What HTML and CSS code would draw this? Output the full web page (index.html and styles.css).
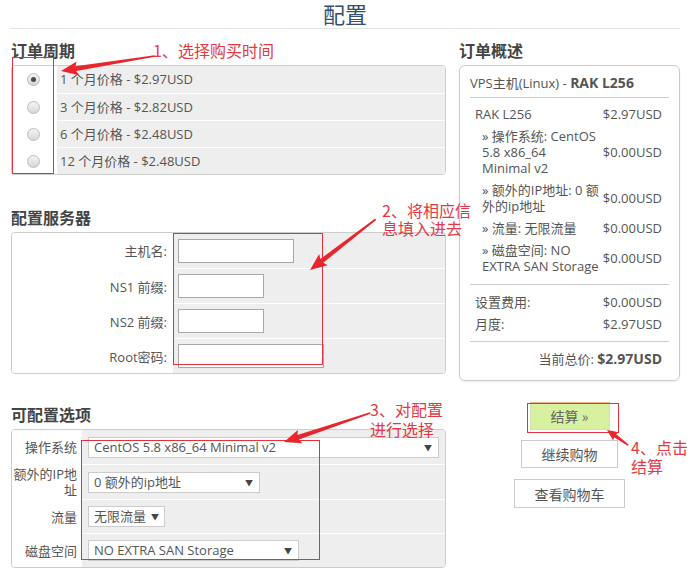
FILE: index.html
```html
<!DOCTYPE html>
<html>

<head>
    <title>配置</title>
    <meta charset="utf-8">
    <link rel="stylesheet" href="styles.css">
</head>

<body>
    <div class="page">
        <h1 class="page-title">配置</h1>

        <div class="layout">
            <div class="main">
                <h2>订单周期</h2>
                <div class="box cycle">
                    <label class="row">
                        <span class="cell-radio"><input type="radio" name="cycle" checked></span>
                        <span class="cell-text">1 个月价格 - $2.97USD</span>
                    </label>
                    <label class="row">
                        <span class="cell-radio"><input type="radio" name="cycle"></span>
                        <span class="cell-text">3 个月价格 - $2.82USD</span>
                    </label>
                    <label class="row">
                        <span class="cell-radio"><input type="radio" name="cycle"></span>
                        <span class="cell-text">6 个月价格 - $2.48USD</span>
                    </label>
                    <label class="row">
                        <span class="cell-radio"><input type="radio" name="cycle"></span>
                        <span class="cell-text">12 个月价格 - $2.48USD</span>
                    </label>
                </div>

                <h2 class="section-server">配置服务器</h2>
                <div class="box server">
                    <div class="row">
                        <span class="cell-label">主机名:</span>
                        <span class="cell-field"><input type="text" class="input-long"></span>
                    </div>
                    <div class="row">
                        <span class="cell-label">NS1 前缀:</span>
                        <span class="cell-field"><input type="text" class="input-short"></span>
                    </div>
                    <div class="row">
                        <span class="cell-label">NS2 前缀:</span>
                        <span class="cell-field"><input type="text" class="input-short"></span>
                    </div>
                    <div class="row">
                        <span class="cell-label">Root密码:</span>
                        <span class="cell-field"><input type="password" class="input-pass"></span>
                    </div>
                </div>

                <h2 class="section-options">可配置选项</h2>
                <div class="box options">
                    <div class="row">
                        <span class="cell-label">操作系统</span>
                        <span class="cell-field">
                            <span class="select select-os">CentOS 5.8 x86_64 Minimal v2<i>▼</i></span>
                        </span>
                    </div>
                    <div class="row row-tall">
                        <span class="cell-label">额外的IP地址</span>
                        <span class="cell-field">
                            <span class="select select-ip">0 额外的ip地址<i>▼</i></span>
                        </span>
                    </div>
                    <div class="row">
                        <span class="cell-label">流量</span>
                        <span class="cell-field">
                            <span class="select select-traffic">无限流量<i>▼</i></span>
                        </span>
                    </div>
                    <div class="row">
                        <span class="cell-label">磁盘空间</span>
                        <span class="cell-field">
                            <span class="select select-disk">NO EXTRA SAN Storage<i>▼</i></span>
                        </span>
                    </div>
                </div>
            </div>

            <div class="side">
                <h2>订单概述</h2>
                <div class="summary">
                    <div class="summary-head">VPS主机(Linux) - <b>RAK L256</b></div>
                    <div class="summary-items">
                        <div class="item">
                            <span class="desc">RAK L256</span>
                            <span class="price">$2.97USD</span>
                        </div>
                        <div class="item sub">
                            <span class="desc">» 操作系统: CentOS<br>5.8 x86_64<br>Minimal v2</span>
                            <span class="price">$0.00USD</span>
                        </div>
                        <div class="item sub">
                            <span class="desc">» 额外的IP地址: 0 额<br>外的ip地址</span>
                            <span class="price">$0.00USD</span>
                        </div>
                        <div class="item sub">
                            <span class="desc">» 流量: 无限流量</span>
                            <span class="price">$0.00USD</span>
                        </div>
                        <div class="item sub">
                            <span class="desc">» 磁盘空间: NO<br>EXTRA SAN Storage</span>
                            <span class="price">$0.00USD</span>
                        </div>
                    </div>
                    <div class="summary-fees">
                        <div class="item">
                            <span class="desc">设置费用:</span>
                            <span class="price">$0.00USD</span>
                        </div>
                        <div class="item">
                            <span class="desc">月度:</span>
                            <span class="price">$2.97USD</span>
                        </div>
                    </div>
                    <div class="summary-total">当前总价: <b>$2.97USD</b></div>
                </div>

                <div class="actions">
                    <button class="btn btn-checkout">结算 »</button>
                    <button class="btn btn-continue">继续购物</button>
                    <button class="btn btn-cart">查看购物车</button>
                </div>
            </div>
        </div>

        <!-- annotations drawn over the screenshot -->
        <div class="mark mark1"></div>
        <div class="mark mark2"></div>
        <div class="mark mark3"></div>
        <div class="mark mark4"></div>

        <div class="note note1">1、选择购买时间</div>
        <div class="note note2">2、将相应信<br>息填入进去</div>
        <div class="note note3">3、对配置<br>进行选择</div>
        <div class="note note4">4、点击<br>结算</div>

        <svg class="arrows" width="689" height="582" viewBox="0 0 689 582">
            <polygon transform="translate(61 71) rotate(-9.1)" points="0,0 17,-7 15,-2.4 95,-0.8 95,0.8 15,2.4 17,7" />
            <polygon transform="translate(310 270) rotate(-37.7)" points="0,0 17,-7 15,-2.4 83,-0.8 83,0.8 15,2.4 17,7" />
            <polygon transform="translate(284 442) rotate(-18.6)" points="0,0 17,-7 15,-2.4 91,-0.8 91,0.8 15,2.4 17,7" />
            <polygon transform="translate(607 430) rotate(35.5)" points="0,0 11,-5 10,-1.8 26,-0.8 26,0.8 10,1.8 11,5" />
        </svg>
    </div>
</body>

</html>
```

FILE: styles.css
```css
body {
    margin: 0;
    font-family: "Open Sans", "Noto Sans CJK SC", sans-serif;
    font-size: 13px;
    color: #555;
    background: #fff;
}

.page {
    position: relative;
    width: 689px;
    height: 582px;
    overflow: hidden;
}

.page-title {
    margin: 0 9px 0 10px;
    padding: 0 0 1px;
    line-height: 27px;
    border-bottom: 1px solid #e5e5e5;
    text-align: center;
    font-family: "Noto Sans CJK SC", sans-serif;
    font-size: 22px;
    font-weight: normal;
    color: #34506e;
}

.layout {
    display: flex;
    padding-left: 11px;
}

.main {
    width: 435px;
}

.side {
    width: 221px;
    margin-left: 13px;
}

h2 {
    margin: 11px 0 5px;
    height: 20px;
    line-height: 20px;
    font-family: "Noto Sans CJK SC", sans-serif;
    font-size: 16px;
    font-weight: bold;
    color: #444;
}

h2.section-server {
    margin-top: 32px;
}

h2.section-options {
    margin-top: 30px;
}

.box {
    border: 1px solid #ccc;
    border-radius: 4px;
    overflow: hidden;
}

.row {
    display: flex;
    box-sizing: border-box;
    border-top: 1px solid #fff;
}

.row:first-child {
    border-top: none;
}

/* order cycle */

.cycle .row {
    height: 27px;
}

.cell-radio {
    width: 43px;
    background: #fff;
    display: flex;
    align-items: center;
    justify-content: center;
    padding-right: 2px;
}

.cell-text {
    flex: 1;
    background: #eee;
    padding-left: 3px;
    line-height: 26px;
}

input[type="radio"] {
    appearance: none;
    -webkit-appearance: none;
    margin: 0;
    width: 13px;
    height: 13px;
    border-radius: 50%;
    border: 1px solid #bdbdbd;
    background: linear-gradient(#f5f5f5, #d6d6d6);
    position: relative;
}

input[type="radio"]:checked::after {
    content: "";
    position: absolute;
    left: 3px;
    top: 3px;
    width: 5px;
    height: 5px;
    border-radius: 50%;
    background: #4a4a4a;
}

/* server fields */

.server .row {
    height: 35px;
}

.cell-label {
    background: #fff;
    text-align: right;
    display: flex;
    align-items: center;
    justify-content: flex-end;
}

.server .cell-label {
    width: 161px;
    padding-right: 6px;
    box-sizing: border-box;
}

.cell-field {
    flex: 1;
    background: #eee;
    display: flex;
    align-items: center;
    padding-left: 5px;
}

input[type="text"],
input[type="password"] {
    margin: 0;
    height: 24px;
    box-sizing: border-box;
    border: 1px solid #a9a9a9;
    background: #fff;
    padding: 0 4px;
}

.input-long {
    width: 116px;
}

.input-short {
    width: 86px;
}

.input-pass {
    width: 146px;
}

/* options */

.options .row {
    height: 34px;
}

.options .row-tall {
    height: 35px;
}

.options .cell-label {
    width: 70px;
    padding-right: 5px;
    box-sizing: border-box;
    line-height: 16px;
}

.options .cell-field {
    padding-left: 6px;
}

.select {
    position: relative;
    display: block;
    height: 21px;
    line-height: 19px;
    box-sizing: border-box;
    border: 1px solid #ccc;
    background: #fff;
    padding-left: 5px;
    color: #555;
}

.select i {
    position: absolute;
    right: 6px;
    top: 0;
    font-style: normal;
    font-size: 8px;
    color: #444;
}

.select-os {
    width: 351px;
}

.select-ip {
    width: 172px;
}

.select-traffic {
    width: 77px;
}

.select-traffic i {
    right: 5px;
}

.select-disk {
    width: 211px;
}

/* order summary */

.summary {
    border: 1px solid #ccc;
    border-radius: 6px;
    padding: 9px 10px 13px;
    box-shadow: 0 1px 2px rgba(0, 0, 0, 0.08);
}

.summary-head {
    line-height: 16px;
    padding-bottom: 6px;
    border-bottom: 1px solid #ccc;
}

.summary-head b {
    font-size: 14px;
    color: #555;
}

.summary-items {
    padding: 5px 0 7px;
}

.summary-fees {
    padding: 6px 0 6px;
    border-top: 1px solid #ccc;
    border-bottom: 1px solid #ccc;
}

.item {
    display: flex;
    align-items: center;
    padding: 3px 7px 3px 5px;
    line-height: 16px;
}

.item.sub .desc {
    padding-left: 7px;
}

.price {
    margin-left: auto;
    white-space: nowrap;
}

.summary-total {
    text-align: right;
    padding: 9px 7px 0 0;
    line-height: 16px;
}

.summary-total b {
    font-size: 14px;
}

/* buttons */

.actions {
    display: flex;
    flex-direction: column;
    align-items: center;
    margin-top: 21px;
}

.btn {
    font-family: "Noto Sans CJK SC", sans-serif;
    font-size: 14px;
    color: #555;
    background: #fff;
    border: 1px solid #ccc;
    height: 28px;
    margin: 0 0 10px;
    padding: 0;
    cursor: pointer;
}

.btn-checkout {
    width: 80px;
    background: #d7f1a0;
    border-color: #d0e0b0;
    border-top-color: #f0b48a;
    color: #666;
}

.btn-continue {
    width: 97px;
    margin-bottom: 11px;
}

.btn-cart {
    width: 111px;
    height: 29px;
}

/* annotations */

.mark {
    position: absolute;
    border: 1px solid #e3323d;
}

.mark1 {
    left: 12px;
    top: 57px;
    width: 40px;
    height: 115px;
}

.mark2 {
    left: 173px;
    top: 233px;
    width: 148px;
    height: 130px;
}

.mark3 {
    left: 81px;
    top: 440px;
    width: 237px;
    height: 118px;
}

.mark4 {
    left: 527px;
    top: 403px;
    width: 90px;
    height: 28px;
}

.note {
    position: absolute;
    font-family: "Noto Sans CJK SC", sans-serif;
    font-size: 16px;
    line-height: 18px;
    color: #e23a44;
    white-space: nowrap;
}

.note1 {
    left: 153px;
    top: 41px;
}

.note2 {
    left: 382px;
    top: 201px;
}

.note3 {
    left: 370px;
    top: 399px;
    line-height: 20px;
}

.note4 {
    left: 631px;
    top: 438px;
    line-height: 19px;
}

.arrows {
    position: absolute;
    left: 0;
    top: 0;
    pointer-events: none;
}

.arrows polygon {
    fill: #e8262e;
}
```
